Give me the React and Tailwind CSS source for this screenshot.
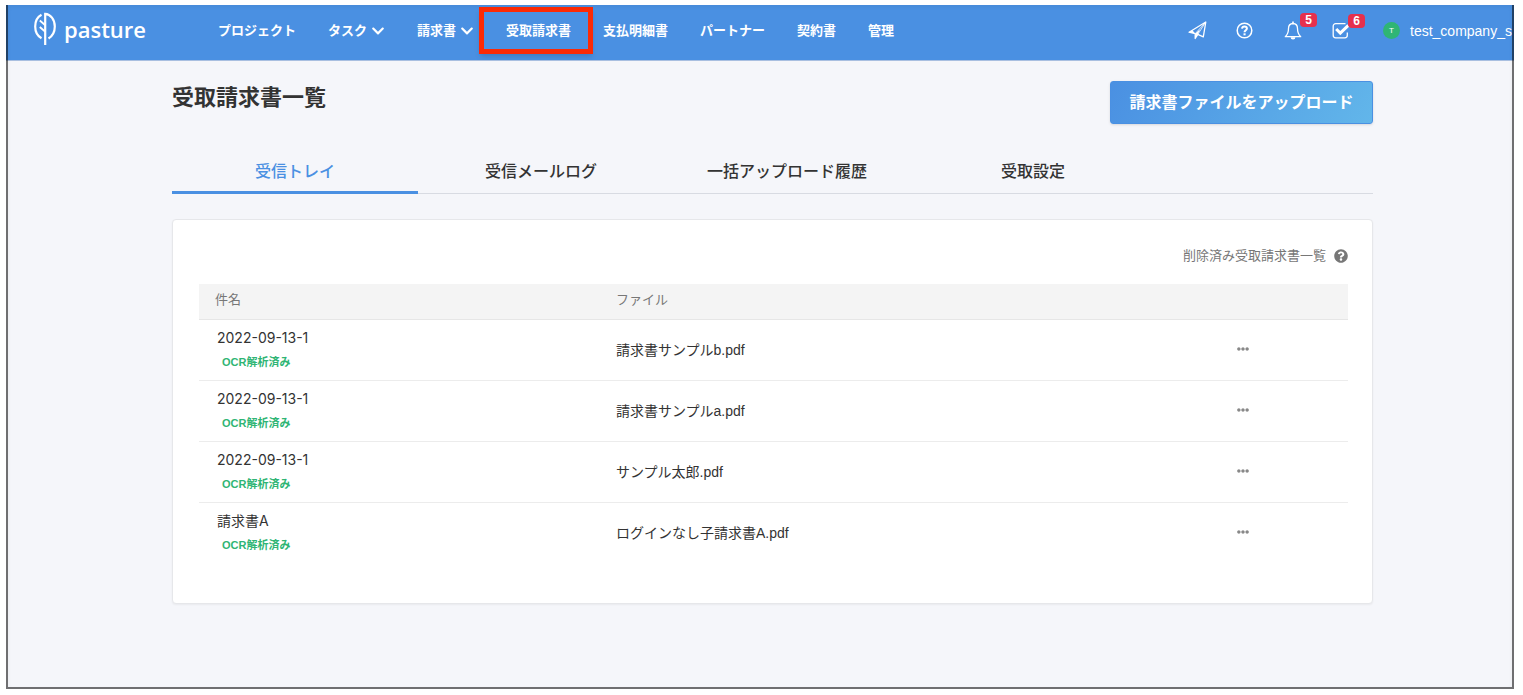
import React, { useState } from "react";
import { FaChevronDown, FaEllipsisH, FaQuestionCircle } from "react-icons/fa";

const navItems = [
  { label: "プロジェクト" },
  { label: "タスク", menu: true },
  { label: "請求書", menu: true },
  { label: "受取請求書", marked: true },
  { label: "支払明細書" },
  { label: "パートナー" },
  { label: "契約書" },
  { label: "管理" },
];

const tabs = ["受信トレイ", "受信メールログ", "一括アップロード履歴", "受取設定"];

const invoices = [
  { id: 1, title: "2022-09-13-1", file: "請求書サンプルb.pdf" },
  { id: 2, title: "2022-09-13-1", file: "請求書サンプルa.pdf" },
  { id: 3, title: "2022-09-13-1", file: "サンプル太郎.pdf" },
  { id: 4, title: "請求書A", file: "ログインなし子請求書A.pdf" },
];

const Logo = () => (
  <a href="#" className="flex items-center gap-2 text-white">
    <svg width="22" height="34" viewBox="0 0 22 34" fill="none" stroke="currentColor" strokeWidth="2.200">
      <path d="M11.200 33V1.800C16.500 2 20.800 7.500 20.800 14.500C20.800 19.500 18.500 24 14.500 26.500" />
      <path d="M7.500 2.800C3.500 5 1.200 9.500 1.200 14.500C1.200 19.500 3.500 24 7.500 26.300" />
      <path d="M5.800 8.500L11 13M5.800 15L11 19.500" strokeWidth="1.800" />
    </svg>
    <span className="font-['Open_Sans',sans-serif] text-[22px] leading-7 font-semibold">
      pasture
    </span>
  </a>
);

const PlaneIcon = () => (
  <svg width="19" height="19" viewBox="0 0 19 19" fill="none" stroke="currentColor" strokeLinejoin="round">
    <path d="M1 11.200L17.800 1L15.300 15.800L9.800 13.400L7.200 17.500V12.700Z" strokeWidth="1.300" />
    <path d="M7.200 12.700L17.800 1L9.800 13.400" strokeWidth="0.800" />
    <path d="M7.200 12.700L12 8.500L9.800 13.400L7.200 17.500ZM1 11.200L4.500 9.200L7.200 12.700Z" fill="currentColor" stroke="none" />
  </svg>
);

const HelpIcon = () => (
  <svg width="17" height="17" viewBox="0 0 17 17" fill="none" stroke="currentColor">
    <circle cx="8.500" cy="8.500" r="7.300" strokeWidth="1.500" />
    <path d="M6 6.700C6.200 5.200 7.200 4.600 8.500 4.600C9.900 4.600 10.900 5.300 10.900 6.500C10.900 8.200 8.600 8.200 8.500 10.300" strokeWidth="2" />
    <path d="M7.500 12.300H9.600" strokeWidth="2" />
  </svg>
);

const BellIcon = () => (
  <svg width="18" height="19" viewBox="0 0 18 19" fill="none" stroke="currentColor">
    <path d="M9 2.500C6 2.700 4.500 4.800 4.500 7.500C4.500 11.500 3.300 13.800 1.300 15.700H16.700C14.700 13.800 13.500 11.500 13.500 7.500C13.500 4.800 12 2.700 9 2.500Z" strokeWidth="1.300" strokeLinejoin="round" />
    <path d="M9 0.500V2.500" strokeWidth="1.600" />
    <path d="M6.600 16.200A2.400 2.300 0 0 0 11.400 16.200Z" fill="currentColor" stroke="none" />
  </svg>
);

const CheckIcon = () => (
  <svg width="18" height="17" viewBox="0 0 18 17" fill="none" stroke="currentColor">
    <path d="M13.500 1.700H3.700C2.300 1.700 1.200 2.700 1.200 4.200V13.300C1.200 14.800 2.300 15.800 3.700 15.800H12.800C14.300 15.800 15.300 14.800 15.300 13.300V10.500" strokeWidth="1.300" />
    <path d="M4.200 7L8.300 11.100L16.300 3.400" strokeWidth="3" />
  </svg>
);

const Badge = ({ count }) => (
  <span className="absolute -top-2 left-4 flex h-[14px] w-[17px] items-center justify-center rounded-sm bg-[#e6304d] text-xs font-bold">
    {count}
  </span>
);

const Header = () => (
  <header className="flex h-14 shrink-0 items-center overflow-hidden border-b border-[#a9bfe0] bg-[#4a90e2] pl-7 text-[13px] text-white">
    <div className="w-[184px] shrink-0 pb-2">
      <Logo />
    </div>
    <nav className="flex shrink-0 items-center gap-8 pb-1 font-bold whitespace-nowrap">
      {navItems.map((item) => (
        <a key={item.label} href="#" className="relative flex items-center gap-1">
          {item.label}
          {item.menu && <FaChevronDown className="size-[14px]" />}
          {item.marked && (
            <span className="absolute -inset-y-[14px] -right-[22px] -left-[27px] border-[5px] border-[#fb2a06] shadow-md" />
          )}
        </a>
      ))}
    </nav>
    <div className="ml-auto flex w-[326px] shrink-0 items-center pb-1 whitespace-nowrap">
      <button type="button" aria-label="送信" className="w-12">
        <PlaneIcon />
      </button>
      <button type="button" aria-label="ヘルプ" className="w-12">
        <HelpIcon />
      </button>
      <button type="button" aria-label="通知" className="relative w-12">
        <BellIcon />
        <Badge count={5} />
      </button>
      <button type="button" aria-label="タスク" className="relative w-[51px]">
        <CheckIcon />
        <Badge count={6} />
      </button>
      <a href="#" className="flex items-center gap-2.5 text-sm">
        <span className="flex size-[17px] shrink-0 items-center justify-center rounded-full bg-[#2fb574] text-[8px]">
          T
        </span>
        test_company_s
      </a>
    </div>
  </header>
);

const InvoiceTable = () => (
  <table className="w-full table-fixed text-left">
    <colgroup>
      <col className="w-[401px]" />
      <col />
      <col className="w-[210px]" />
    </colgroup>
    <thead>
      <tr className="h-[35px] border-b border-[#e6e6e6] bg-[#f4f4f4] text-[13px] text-[#777]">
        <th className="px-4 pb-1 font-normal">件名</th>
        <th className="px-4 pb-1 font-normal">ファイル</th>
        <th aria-label="操作"></th>
      </tr>
    </thead>
    <tbody className="text-sm">
      {invoices.map((invoice) => (
        <tr key={invoice.id} className="h-[61px] border-b border-[#ececec] last:border-b-0">
          <td className="px-[18px]">
            <p className="font-['Inter','Noto_Sans_CJK_JP',sans-serif] leading-6">
              {invoice.title}
            </p>
            <p className="pl-[5px] text-[11px] leading-6 font-bold text-[#2fb574]">
              OCR解析済み
            </p>
          </td>
          <td className="px-4">{invoice.file}</td>
          <td className="text-center">
            <button type="button" aria-label="メニュー" className="text-[#888]">
              <FaEllipsisH className="size-3" />
            </button>
          </td>
        </tr>
      ))}
    </tbody>
  </table>
);

const App = () => {
  const [activeTab, setActiveTab] = useState(0);

  return (
    <div className="flex min-h-screen flex-col bg-white pt-[5px] pr-[9px] pb-[6px] pl-[6px] font-['Liberation_Sans','Noto_Sans_CJK_JP',sans-serif] text-[#333]">
      <div className="relative flex flex-1 flex-col bg-[#f5f6fa]">
        <Header />

        <main className="pr-[141px] pb-20 pl-[166px]">
          <div className="flex items-start justify-between pt-5">
            <h1 className="text-[22px] leading-[34px] font-bold">受取請求書一覧</h1>
            <button
              type="button"
              className="h-[43px] w-[263px] rounded-[3px] border border-[#4a90e2] bg-linear-[120deg] from-[#4a90e2] to-[#62b6ea] text-base font-bold text-white shadow"
            >
              請求書ファイルをアップロード
            </button>
          </div>

          <div role="tablist" className="mt-6 flex border-b border-[#d8dbe2]">
            {tabs.map((tab, index) => (
              <button
                key={tab}
                type="button"
                role="tab"
                aria-selected={index === activeTab}
                onClick={() => setActiveTab(index)}
                className={`-mb-px h-[46px] w-[246px] border-b-[3px] pt-1 text-base font-medium ${
                  index === activeTab ? "border-[#4a90e2] text-[#4a90e2]" : "border-transparent"
                }`}
              >
                {tab}
              </button>
            ))}
          </div>

          <section className="mt-[25px] rounded border border-[#e6e7ea] bg-white pt-6 pr-6 pb-10 pl-[26px] shadow-xs">
            <div className="mb-4 flex h-6 items-center justify-end gap-2 text-[13px] text-[#777]">
              <a href="#">削除済み受取請求書一覧</a>
              <FaQuestionCircle className="size-[14px]" />
            </div>
            <InvoiceTable />
          </section>
        </main>

        {/* window edge, drawn over the header as well */}
        <div className="pointer-events-none absolute inset-0 border-x-2 border-b-2 border-black/55 inset-shadow-sm" />
      </div>
    </div>
  );
};

export default App;
